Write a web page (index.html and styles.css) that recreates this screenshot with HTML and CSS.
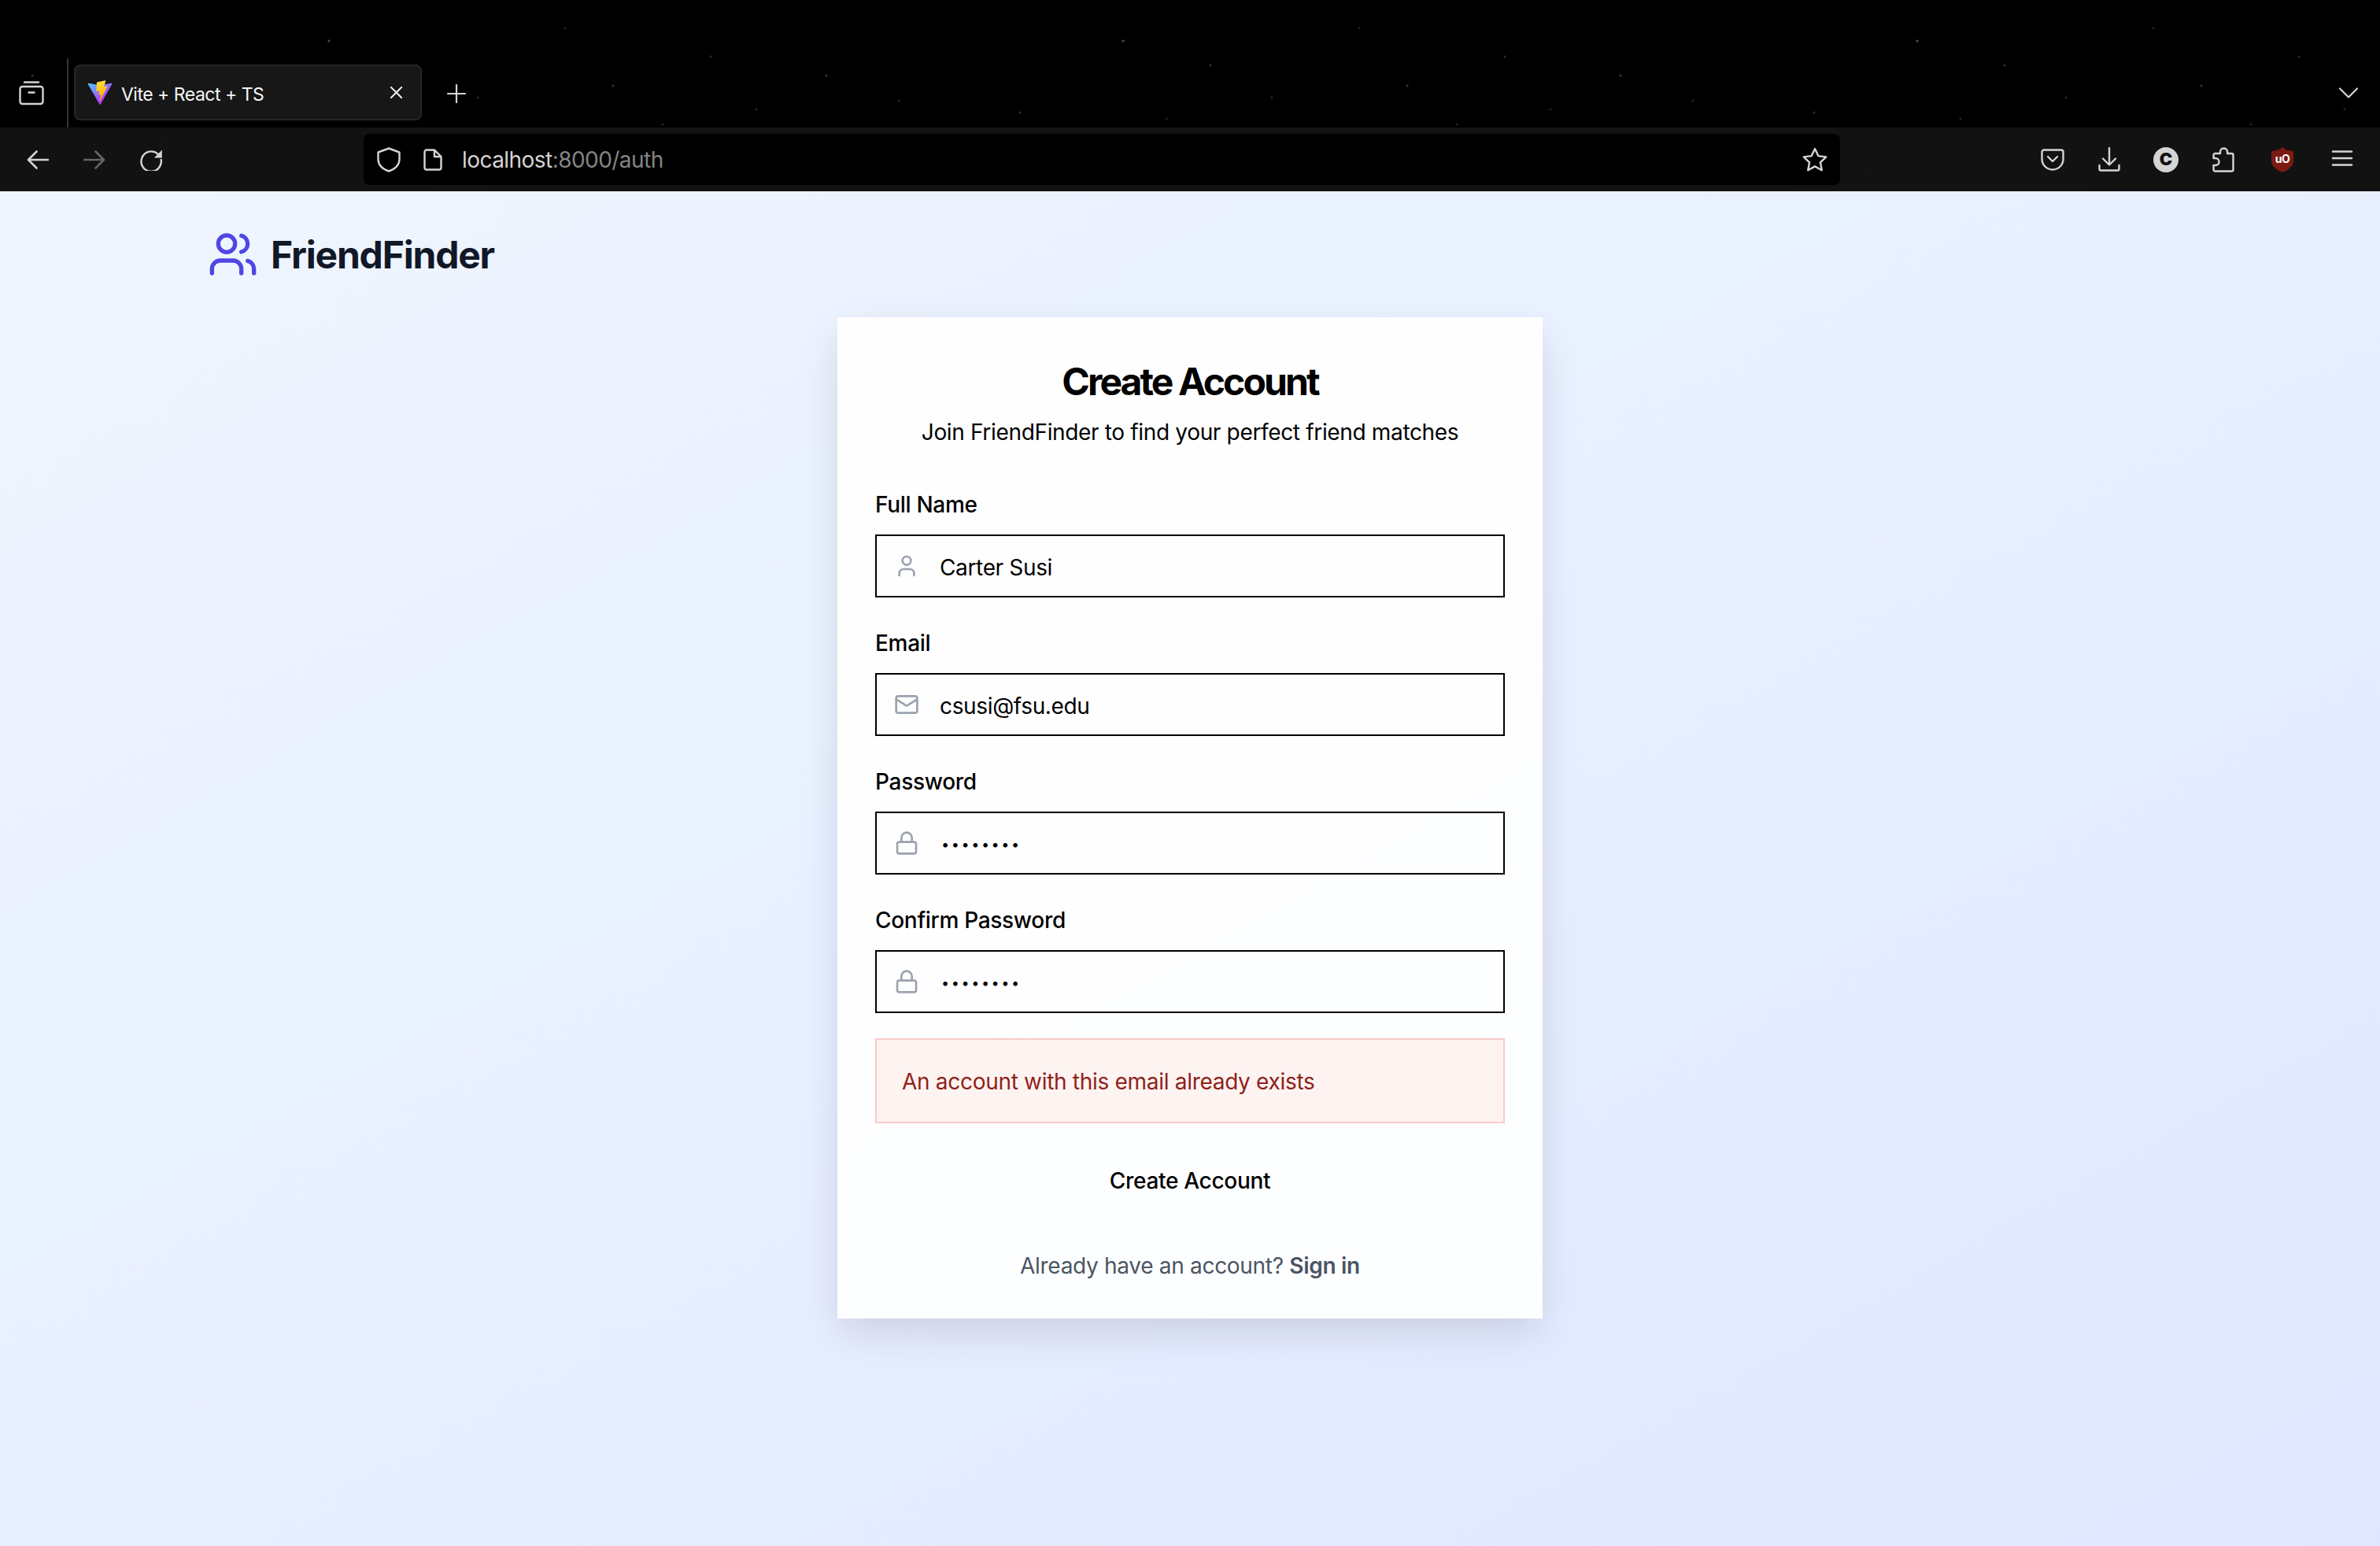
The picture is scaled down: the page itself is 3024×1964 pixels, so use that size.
FILE: index.html
```html
<!DOCTYPE html>
<html lang="en">
<head>
    <meta charset="UTF-8">
    <meta name="viewport" content="width=device-width, initial-scale=1.0">
    <title>Vite + React + TS</title>
    <link rel="stylesheet" href="styles.css">
</head>
<body>
    <!-- browser chrome -->
    <header class="chrome">
        <div class="tabbar">
            <svg class="tab-sidebar" viewBox="0 0 32 32" fill="none" stroke="currentColor" stroke-width="2.4" stroke-linecap="round" stroke-linejoin="round">
                <path d="M7 2.5h18"/>
                <rect x="1.5" y="8" width="29" height="22" rx="3"/>
                <path d="M12.5 15.5h7"/>
            </svg>
            <div class="tab-divider"></div>
            <div class="tab">
                <svg class="tab-favicon" viewBox="0 0 410 404">
                    <defs>
                        <linearGradient id="viteA" x1="6" y1="33" x2="235" y2="344" gradientUnits="userSpaceOnUse">
                            <stop offset="0" stop-color="#41D1FF"/>
                            <stop offset="1" stop-color="#BD34FE"/>
                        </linearGradient>
                        <linearGradient id="viteB" x1="194" y1="8.8" x2="236" y2="293" gradientUnits="userSpaceOnUse">
                            <stop offset="0" stop-color="#FFEA83"/>
                            <stop offset="0.08" stop-color="#FFDD35"/>
                            <stop offset="1" stop-color="#FFA800"/>
                        </linearGradient>
                    </defs>
                    <path fill="url(#viteA)" d="M399.641 59.5246L215.643 388.545C211.844 395.338 202.084 395.378 198.228 388.618L10.5817 59.5563C6.38087 52.1896 12.6802 43.2665 21.0281 44.7586L205.223 77.6824C206.398 77.8924 207.601 77.8904 208.776 77.6763L389.119 44.8058C397.439 43.2894 403.768 52.1434 399.641 59.5246Z"/>
                    <path fill="url(#viteB)" d="M292.965 1.5744L156.801 28.2552C154.563 28.6937 152.906 30.5903 152.771 32.8664L144.395 174.33C144.198 177.662 147.258 180.248 150.51 179.498L188.42 170.749C191.967 169.931 195.172 173.055 194.443 176.622L183.18 231.775C182.422 235.487 185.907 238.661 189.532 237.56L212.947 230.446C216.577 229.344 220.065 232.527 219.297 236.242L201.398 322.875C200.278 328.294 207.486 331.249 210.492 326.603L212.5 323.5L323.454 102.072C325.312 98.3645 322.108 94.137 318.036 94.9228L279.014 102.454C275.347 103.161 272.227 99.746 273.262 96.1583L298.731 7.86689C299.767 4.27314 296.636 0.855181 292.965 1.5744Z"/>
                </svg>
                <span class="tab-title">Vite + React + TS</span>
                <svg class="tab-close" viewBox="0 0 18 18" fill="none" stroke="currentColor" stroke-width="2.2" stroke-linecap="round">
                    <path d="M2 2l14 14M16 2L2 16"/>
                </svg>
            </div>
            <svg class="tab-new" viewBox="0 0 24 24" fill="none" stroke="currentColor" stroke-width="2.2" stroke-linecap="round">
                <path d="M12 1v22M1 12h22"/>
            </svg>
            <svg class="tab-list" viewBox="0 0 24 14" fill="none" stroke="currentColor" stroke-width="2.2" stroke-linecap="round" stroke-linejoin="round">
                <path d="M1 1.5l11 11 11-11"/>
            </svg>
        </div>
        <div class="navbar">
            <svg class="nav-back" viewBox="0 0 28 24" fill="none" stroke="currentColor" stroke-width="2.6" stroke-linecap="round" stroke-linejoin="round">
                <path d="M27 12H2M12.5 1.5L2 12l10.5 10.5"/>
            </svg>
            <svg class="nav-forward" viewBox="0 0 28 24" fill="none" stroke="currentColor" stroke-width="2.6" stroke-linecap="round" stroke-linejoin="round">
                <path d="M1 12h25M15.500 1.500L26 12 15.500 22.500"/>
            </svg>
            <svg class="nav-reload" viewBox="0 0 28 28" fill="none">
                <path d="M22.500 6.500A12.700 12.700 0 1 0 26.700 14" stroke="currentColor" stroke-width="2.400" stroke-linecap="round"/>
                <path d="M27.800 1.500V11.500H17.800Z" fill="currentColor"/>
            </svg>
            <div class="urlbar">
                <svg class="url-shield" viewBox="0 0 30 32" fill="none" stroke="currentColor" stroke-width="2.400" stroke-linejoin="round">
                    <path d="M15 1.500L28.500 6.500V15C28.500 23 22 28 15 30.500C8 28 1.500 23 1.500 15V6.500Z"/>
                </svg>
                <svg class="url-page" viewBox="0 0 24 28" fill="none" stroke="currentColor" stroke-width="2.400" stroke-linejoin="round">
                    <path d="M4 1.500H14L22.500 10V24A2.500 2.500 0 0 1 20 26.500H4A2.500 2.500 0 0 1 1.500 24V4A2.500 2.500 0 0 1 4 1.500Z"/>
                    <path d="M14 1.500V10H22.500"/>
                </svg>
                <span class="url-text">localhost<span class="url-path">:8000/auth</span></span>
                <svg class="url-star" viewBox="0 0 32 32" fill="none" stroke="currentColor" stroke-width="2.400" stroke-linejoin="round">
                    <path d="M16 2l4.300 9.100 9.900 1.300-7.300 6.900 1.900 9.900L16 24.400l-8.800 4.800 1.900-9.900-7.300-6.900 9.900-1.300Z"/>
                </svg>
            </div>
            <div class="nav-tools">
                <svg class="tool" viewBox="0 0 32 32" fill="none" stroke="currentColor" stroke-width="2.400" stroke-linecap="round" stroke-linejoin="round">
                    <path d="M5 3.500H27A2.500 2.500 0 0 1 29.500 6V15C29.500 23 23 28.500 16 28.500S2.500 23 2.500 15V6A2.500 2.500 0 0 1 5 3.500Z"/>
                    <path d="M10 12l6 6 6-6"/>
                </svg>
                <svg class="tool" viewBox="0 0 32 32" fill="none" stroke="currentColor" stroke-width="2.400" stroke-linecap="round" stroke-linejoin="round">
                    <path d="M16 1v21M8 14.500l8 8 8-8"/>
                    <path d="M3.500 23v4.500A2 2 0 0 0 5.500 29.500h21a2 2 0 0 0 2-2V23"/>
                </svg>
                <svg class="tool" viewBox="0 0 32 32">
                    <circle cx="16" cy="16" r="16" fill="#d4d4d4"/>
                    <text class="tool-letter" x="16" y="23" text-anchor="middle">C</text>
                </svg>
                <svg class="tool tool-puzzle" viewBox="0 0 32 32" fill="none" stroke="currentColor" stroke-width="2.400" stroke-linejoin="round">
                    <path d="M12 8V5.500a4.500 4 0 0 1 9 0V8h5.500a2 2 0 0 1 2 2V28.500a2 2 0 0 1-2 2H5.500a2 2 0 0 1-2-2V23H6a4.500 4.500 0 0 0 0-9H3.500V10a2 2 0 0 1 2-2Z"/>
                </svg>
                <svg class="tool tool-shield" viewBox="0 0 32 32">
                    <path fill="#7a1a12" d="M16 0L21 3.500L30 5V17C30 24 24 29 16 32C8 29 2 24 2 17V5L11 3.500Z"/>
                    <text class="tool-ublock" x="16" y="20" text-anchor="middle">uO</text>
                </svg>
                <svg class="tool tool-menu" viewBox="0 0 32 32" fill="none" stroke="currentColor" stroke-width="2.600" stroke-linecap="round">
                    <path d="M4 5.500h24M4 14h24M4 22.500h24"/>
                </svg>
            </div>
        </div>
    </header>

    <main class="page">
        <div class="brand">
            <svg class="brand-icon" viewBox="0 0 24 24" fill="none" stroke="currentColor" stroke-width="2" stroke-linecap="round" stroke-linejoin="round">
                <path d="M16 21v-2a4 4 0 0 0-4-4H6a4 4 0 0 0-4 4v2"/>
                <circle cx="9" cy="7" r="4"/>
                <path d="M22 21v-2a4 4 0 0 0-3-3.870"/>
                <path d="M16 3.130a4 4 0 0 1 0 7.750"/>
            </svg>
            <span class="brand-name">FriendFinder</span>
        </div>

        <section class="card">
            <h1 class="card-title">Create Account</h1>
            <p class="card-subtitle">Join FriendFinder to find your perfect friend matches</p>

            <form class="form">
                <div class="field">
                    <label class="field-label">Full Name</label>
                    <div class="field-box">
                        <span class="field-icon">
                            <svg viewBox="0 0 24 24" fill="none" stroke="currentColor" stroke-width="2" stroke-linecap="round" stroke-linejoin="round">
                                <path d="M19 21v-2a4 4 0 0 0-4-4H9a4 4 0 0 0-4 4v2"/>
                                <circle cx="12" cy="7" r="4"/>
                            </svg>
                        </span>
                        <span class="field-value">Carter Susi</span>
                    </div>
                </div>
                <div class="field">
                    <label class="field-label">Email</label>
                    <div class="field-box">
                        <span class="field-icon">
                            <svg viewBox="0 0 24 24" fill="none" stroke="currentColor" stroke-width="2" stroke-linecap="round" stroke-linejoin="round">
                                <rect x="2" y="4" width="20" height="16" rx="2"/>
                                <path d="m22 7-8.970 5.700a1.940 1.940 0 0 1-2.060 0L2 7"/>
                            </svg>
                        </span>
                        <span class="field-value">csusi@fsu.edu</span>
                    </div>
                </div>
                <div class="field">
                    <label class="field-label">Password</label>
                    <div class="field-box">
                        <span class="field-icon">
                            <svg viewBox="0 0 24 24" fill="none" stroke="currentColor" stroke-width="2" stroke-linecap="round" stroke-linejoin="round">
                                <rect x="3" y="11" width="18" height="11" rx="2"/>
                                <path d="M7 11V7a5 5 0 0 1 10 0v4"/>
                            </svg>
                        </span>
                        <span class="field-value field-dots">••••••••</span>
                    </div>
                </div>
                <div class="field">
                    <label class="field-label">Confirm Password</label>
                    <div class="field-box">
                        <span class="field-icon">
                            <svg viewBox="0 0 24 24" fill="none" stroke="currentColor" stroke-width="2" stroke-linecap="round" stroke-linejoin="round">
                                <rect x="3" y="11" width="18" height="11" rx="2"/>
                                <path d="M7 11V7a5 5 0 0 1 10 0v4"/>
                            </svg>
                        </span>
                        <span class="field-value field-dots">••••••••</span>
                    </div>
                </div>

                <div class="alert">An account with this email already exists</div>

                <button type="button" class="submit">Create Account</button>
            </form>

            <p class="switch">Already have an account? <a class="switch-link">Sign in</a></p>
        </section>
    </main>
</body>
</html>
```

FILE: styles.css
```css
* {
    box-sizing: border-box;
}

html, body {
    height: 100%;
}

body {
    margin: 0;
    display: flex;
    flex-direction: column;
    height: 1964px;
    overflow: hidden;
    font-family: Inter, "Noto Sans", sans-serif;
    color: #000;
}

svg {
    display: block;
    flex-shrink: 0;
}

/* browser chrome, the wallpaper behind it is a faint star field */
.chrome {
    color: #d4d4d4;
    background-color: #000;
    background-image:
        radial-gradient(circle at 41px 96px, rgba(255, 255, 255, 0.2) 1px, transparent 2px),
        radial-gradient(circle at 133px 128px, rgba(255, 255, 255, 0.14) 1px, transparent 2px),
        radial-gradient(circle at 212px 177px, rgba(255, 255, 255, 0.12) 1px, transparent 2px),
        radial-gradient(circle at 287px 143px, rgba(255, 255, 255, 0.16) 1px, transparent 2px),
        radial-gradient(circle at 356px 219px, rgba(255, 255, 255, 0.1) 1px, transparent 2px),
        radial-gradient(circle at 418px 52px, rgba(255, 255, 255, 0.3) 1px, transparent 2px),
        radial-gradient(circle at 473px 151px, rgba(255, 255, 255, 0.12) 1px, transparent 2px),
        radial-gradient(circle at 529px 83px, rgba(255, 255, 255, 0.18) 1px, transparent 2px),
        radial-gradient(circle at 607px 124px, rgba(255, 255, 255, 0.14) 1px, transparent 2px),
        radial-gradient(circle at 661px 203px, rgba(255, 255, 255, 0.1) 1px, transparent 2px),
        radial-gradient(circle at 718px 36px, rgba(255, 255, 255, 0.12) 1px, transparent 2px),
        radial-gradient(circle at 779px 109px, rgba(255, 255, 255, 0.2) 1px, transparent 2px),
        radial-gradient(circle at 842px 158px, rgba(255, 255, 255, 0.12) 1px, transparent 2px),
        radial-gradient(circle at 903px 72px, rgba(255, 255, 255, 0.16) 1px, transparent 2px),
        radial-gradient(circle at 961px 139px, rgba(255, 255, 255, 0.14) 1px, transparent 2px),
        radial-gradient(circle at 989px 226px, rgba(255, 255, 255, 0.1) 1px, transparent 2px);
    background-size: 1009px 243px;
}

.tabbar {
    height: 162px;
    padding-top: 74px;
    display: flex;
    align-items: center;
}

.tab-sidebar {
    width: 32px;
    height: 32px;
    margin-left: 24px;
}

.tab-divider {
    width: 2px;
    height: 88px;
    margin-left: 29px;
    background-color: #333;
}

.tab {
    width: 442px;
    height: 71px;
    margin-left: 7px;
    padding: 0 22px 0 15px;
    display: flex;
    align-items: center;
    background-color: #171717;
    border: 2px solid #262626;
    border-radius: 8px;
    margin-bottom: 1px;
}

.tab-favicon {
    width: 32px;
    height: 32px;
}

.tab-title {
    margin-left: 11px;
    padding-top: 5px;
    font-size: 23px;
    letter-spacing: -0.5px;
    color: #f5f5f5;
}

.tab-close {
    width: 17px;
    height: 17px;
    margin-left: auto;
    color: #f5f5f5;
}

.tab-new {
    width: 24px;
    height: 24px;
    margin-left: 32px;
    margin-top: 2px;
}

.tab-list {
    width: 24px;
    height: 14px;
    margin-left: auto;
    margin-right: 28px;
}

.navbar {
    height: 81px;
    display: flex;
    align-items: center;
    padding-left: 34px;
    background-color: rgba(22, 22, 22, 0.8);
}

.nav-back,
.nav-forward {
    width: 28px;
    height: 24px;
}

.nav-forward {
    margin-left: 44px;
    color: #666;
}

.nav-reload {
    width: 28px;
    height: 28px;
    margin-left: 44px;
}

.urlbar {
    width: 1876px;
    height: 65px;
    margin-left: 256px;
    padding: 0 16px 0 17px;
    display: flex;
    align-items: center;
    background-color: #000;
    border-radius: 8px;
}

.url-shield {
    width: 30px;
    height: 32px;
}

.url-page {
    width: 24px;
    height: 28px;
    margin-left: 29px;
}

.url-text {
    margin-left: 25px;
    font-size: 28px;
    letter-spacing: -0.55px;
    color: #d4d4d4;
}

.url-path {
    color: #858585;
}

.url-star {
    width: 32px;
    height: 32px;
    margin-left: auto;
}

.nav-tools {
    margin-left: auto;
    padding-right: 32px;
    display: flex;
    align-items: center;
    gap: 40px;
}

.tool {
    width: 32px;
    height: 32px;
}

.tool-puzzle {
    margin-left: 1px;
}

.tool-shield {
    margin-left: 3px;
}

.tool-menu {
    margin-left: 4px;
}

.tool-letter {
    font-size: 22px;
    font-weight: 900;
    fill: #111;
}

.tool-ublock {
    font-size: 14px;
    font-weight: 700;
    letter-spacing: -0.5px;
    fill: #fff;
}

/* page */
.page {
    flex: 1;
    padding: 48px 264px 0;
    background: linear-gradient(to bottom right, #eff6ff, #e0e7ff);
}

.brand {
    display: flex;
    align-items: center;
    gap: 16px;
}

.brand-icon {
    width: 64px;
    height: 64px;
    color: #4f46e5;
}

.brand-name {
    font-size: 48px;
    font-weight: 700;
    letter-spacing: -1.2px;
    color: #111827;
}

.card {
    width: 896px;
    margin: 48px auto 0;
    padding: 48px 48px 0;
    height: 1272px;
    background-color: rgba(255, 255, 255, 0.92);
    box-shadow: 0 20px 50px -5px rgba(0, 0, 0, 0.13);
}

.card-title {
    margin: 0;
    height: 68px;
    line-height: 68px;
    font-size: 48px;
    font-weight: 700;
    letter-spacing: -2.9px;
    text-align: center;
}

.card-subtitle {
    margin: 12px 0 0;
    height: 40px;
    line-height: 36px;
    font-size: 28px;
    letter-spacing: -0.34px;
    text-align: center;
}

.form {
    margin-top: 52px;
    display: flex;
    flex-direction: column;
}

.field {
    margin-bottom: 40px;
}

.field-label {
    display: block;
    height: 40px;
    line-height: 36px;
    margin-bottom: 16px;
    font-size: 28px;
    font-weight: 500;
    letter-spacing: -0.3px;
}

.field-box {
    height: 80px;
    padding-left: 22px;
    display: flex;
    align-items: center;
    border: 2px solid #000;
}

.field-icon {
    width: 32px;
    height: 32px;
    color: #9ca3af;
}

.field-value {
    margin-left: 26px;
    padding-top: 3px;
    font-size: 28px;
    letter-spacing: -0.35px;
}

.field-dots {
    margin-left: 28px;
    font-size: 18px;
    letter-spacing: 2.6px;
}

.alert {
    height: 108px;
    margin-top: -8px;
    padding: 2px 0 0 32px;
    display: flex;
    align-items: center;
    font-size: 28px;
    letter-spacing: -0.3px;
    color: #8f1f1a;
    background-color: #fdf3f1;
    border: 2px solid #f8caca;
}

.submit {
    height: 82px;
    margin-top: 32px;
    padding: 0;
    font-family: inherit;
    font-size: 28px;
    font-weight: 500;
    letter-spacing: -0.3px;
    color: #000;
    background: none;
    border: none;
    cursor: pointer;
}

.switch {
    margin: 46px 0 0;
    height: 40px;
    line-height: 42px;
    font-size: 28px;
    letter-spacing: -0.3px;
    color: #4b5563;
    text-align: center;
}

.switch-link {
    font-weight: 600;
}
```
